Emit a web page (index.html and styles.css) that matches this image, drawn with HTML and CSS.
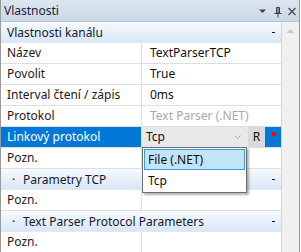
FILE: index.html
```html
<!DOCTYPE html>
<html lang="cs">
<head>
  <meta charset="UTF-8">
  <title>Vlastnosti</title>
  <link rel="stylesheet" href="styles.css">
</head>
<body>
  <div class="window">
    <div class="caption">
      <span class="caption-title">Vlastnosti</span>
      <svg class="caption-tools" width="44" height="21" viewBox="0 0 44 21">
        <polygon points="4,9.5 11,9.5 7.5,13" fill="#3f3f46"/>
        <path d="M21.5 7.5h3v5.5h-3z" fill="none" stroke="#3f3f46" stroke-width="1"/>
        <path d="M23 7.5v5.5" stroke="#3f3f46" stroke-width="1"/>
        <path d="M19.5 13.5h7" stroke="#3f3f46" stroke-width="1"/>
        <path d="M23 13.5v4" stroke="#3f3f46" stroke-width="1"/>
        <path d="M33.5 8l7 7M40.5 8l-7 7" stroke="#4a4a50" stroke-width="1.3"/>
      </svg>
    </div>

    <div class="content">
      <div class="grid">
        <div class="category">
          <span class="cat-name">Vlastnosti kanálu</span>
          <span class="collapse"></span>
        </div>
        <div class="row"><div class="name">Název</div><div class="value">TextParserTCP</div></div>
        <div class="row"><div class="name">Povolit</div><div class="value">True</div></div>
        <div class="row"><div class="name">Interval čtení / zápis</div><div class="value">0ms</div></div>
        <div class="row"><div class="name">Protokol</div><div class="value disabled">Text Parser (.NET)</div></div>
        <div class="row selected">
          <div class="name">Linkový protokol</div>
          <div class="value editor">
            <div class="combo">
              <span class="combo-text">Tcp</span>
              <svg class="chevron" width="7" height="4" viewBox="0 0 7 4"><path d="M0.5 0.5l3 3 3-3" fill="none" stroke="#a8a8a8" stroke-width="1"/></svg>
            </div>
            <div class="reset">R</div>
            <div class="marker"><span class="marker-dot"></span></div>
          </div>
        </div>
        <div class="row"><div class="name">Pozn.</div><div class="value"></div></div>
        <div class="category">
          <span class="cat-name"><span class="bullet">·</span>Parametry TCP</span>
          <span class="collapse"></span>
        </div>
        <div class="row"><div class="name">Pozn.</div><div class="value"></div></div>
        <div class="category">
          <span class="cat-name"><span class="bullet">·</span>Text Parser Protocol Parameters</span>
          <span class="collapse"></span>
        </div>
        <div class="row"><div class="name">Pozn.</div><div class="value"></div></div>
      </div>

      <div class="vscroll">
        <svg width="17" height="17" viewBox="0 0 17 17"><polygon points="4.5,11 12.5,11 8.5,7" fill="#c8c8c8"/></svg>
      </div>
    </div>

    <!-- open combo list -->
    <div class="dropdown">
      <div class="option active">File (.NET)</div>
      <div class="option">Tcp</div>
    </div>
  </div>
</body>
</html>
```

FILE: styles.css
```css
* { margin: 0; padding: 0; box-sizing: border-box; }

body {
  width: 301px;
  height: 252px;
  overflow: hidden;
  background: #ffffff;
  font-family: "Noto Sans", "Open Sans", sans-serif;
  font-size: 12px;
  color: #1e1e1e;
}

.window {
  position: relative;
  width: 300px;
  height: 252px;
  border-left: 1px solid #9a9a9a;
  border-right: 1px solid #9a9a9a;
  display: flex;
  flex-direction: column;
}

.caption {
  height: 22px;
  display: flex;
  align-items: center;
  justify-content: space-between;
  padding-left: 3px;
  background: linear-gradient(#dce6f1, #cbd8e6);
  border-bottom: 1px solid #b3c1d1;
  color: #1b2433;
}
.caption-title { line-height: 21px; }
.caption-tools { display: block; }

.content {
  flex: 1;
  display: flex;
  min-height: 0;
}

.grid {
  width: 281px;
  border-right: 1px solid #d4d4d4;
}

.row {
  display: flex;
  height: 21px;
  border-bottom: 1px solid #dedede;
}
.name {
  width: 141px;
  padding-left: 6px;
  line-height: 20px;
  border-right: 1px solid #dedede;
  color: #2b1616;
  white-space: nowrap;
}
.value {
  flex: 1;
  padding-left: 8px;
  line-height: 20px;
  color: #101010;
  white-space: nowrap;
}
.value.disabled { color: #a8a8a8; }

.row.selected .name {
  background: #0078d7;
  color: #ffffff;
}

.editor {
  display: flex;
  padding-left: 0;
}
.combo {
  width: 106px;
  display: flex;
  align-items: center;
  justify-content: space-between;
  padding: 0 7px 0 4px;
  background: #e8e8e8;
}
.chevron { display: block; }
.reset {
  width: 17px;
  text-align: center;
  background: #dadada;
}
.marker {
  flex: 1;
  display: flex;
  align-items: center;
  justify-content: center;
  background: #0078d7;
}
.marker-dot {
  width: 4px;
  height: 4px;
  background: #ff0000;
  margin-bottom: 6px;
  margin-left: 1px;
}

.category {
  display: flex;
  justify-content: space-between;
  align-items: center;
  height: 21px;
  padding: 0 6px 0 6px;
  background: linear-gradient(#f7fafe, #d8e6f6);
  border-bottom: 1px solid #e2e8f0;
  color: #141a2c;
  white-space: nowrap;
}
.bullet {
  display: inline-block;
  width: 16px;
  padding-left: 5px;
}
.collapse {
  width: 3px;
  height: 1px;
  margin-top: 1px;
  background: #1a1a1a;
}

.vscroll {
  flex: 1;
  background: #f0f0f0;
}
.vscroll svg { display: block; }

.dropdown {
  position: absolute;
  left: 141px;
  top: 147px;
  width: 105px;
  padding: 1px;
  background: #ffffff;
  border: 1px solid #6e6e6e;
  box-shadow: 2px 2px 2px rgba(0, 0, 0, 0.3);
}
.option {
  height: 21px;
  line-height: 19px;
  padding-left: 3px;
  border: 1px solid transparent;
  color: #101010;
}
.option.active {
  background: #c1e4f7;
  border-color: #3a9ad9;
}
```
